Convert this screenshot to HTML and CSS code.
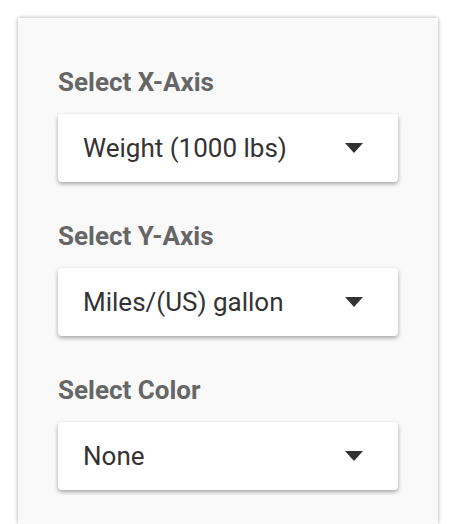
FILE: index.html
```html
<!DOCTYPE html>
<html>
<head>
<meta charset="utf-8">
<link rel="stylesheet" href="styles.css">
</head>
<body>
<div class="panel">
  <div class="group">
    <div class="label">Select X-Axis</div>
    <div class="select"><span class="value">Weight (1000 lbs)</span><span class="arrow"></span></div>
  </div>
  <div class="group">
    <div class="label">Select Y-Axis</div>
    <div class="select"><span class="value">Miles/(US) gallon</span><span class="arrow"></span></div>
  </div>
  <div class="group">
    <div class="label">Select Color</div>
    <div class="select"><span class="value">None</span><span class="arrow"></span></div>
  </div>
</div>
</body>
</html>
```
FILE: styles.css
```css
html, body {
  margin: 0;
  padding: 0;
  background: #ffffff;
  overflow: hidden;
}
body {
  padding: 18px 20px 0 18px;
  height: 524px;
  box-sizing: border-box;
  font-family: Roboto, "Noto Sans", sans-serif;
}
.panel {
  width: 420px;
  height: 506px;
  box-sizing: border-box;
  background: #f9f9f9;
  box-shadow: 0 0 4px rgba(0, 0, 0, 0.35);
  padding: 51px 40px 0 40px;
  display: flex;
  flex-direction: column;
  gap: 41px;
}
.group {
  display: flex;
  flex-direction: column;
  gap: 19px;
}
.label {
  font-size: 26px;
  line-height: 26px;
  font-weight: 700;
  color: #666666;
}
.select {
  height: 68px;
  width: 340px;
  box-sizing: border-box;
  background: #ffffff;
  border-radius: 4px;
  box-shadow: 0 2px 4px rgba(0, 0, 0, 0.35);
  display: flex;
  align-items: center;
  justify-content: space-between;
  padding: 0 35px 0 25px;
}
.value {
  font-size: 26px;
  color: #333333;
}
.arrow {
  width: 0;
  height: 0;
  border-left: 9.5px solid transparent;
  border-right: 9.5px solid transparent;
  border-top: 10px solid #333333;
}
```
